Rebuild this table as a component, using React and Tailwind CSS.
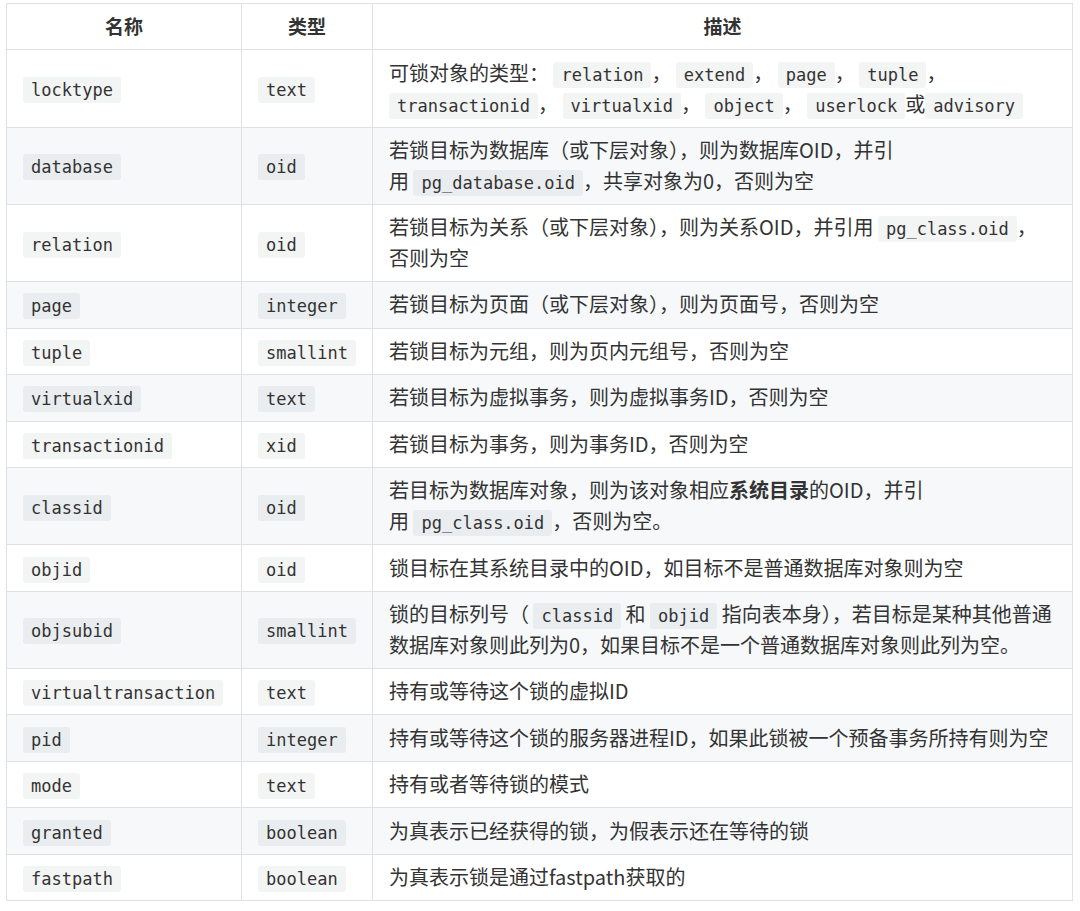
import React from "react";

const C = ({ children }) => (
  <code className="font-['DejaVu_Sans_Mono',monospace] text-[17px] leading-[20px] bg-[rgba(27,31,35,0.05)] rounded-[3px] px-2 py-[3px]">
    {children}
  </code>
);

const rows = [
  ["locktype", "text", (
    <>可锁对象的类型： <C>relation</C>， <C>extend</C>， <C>page</C>， <C>tuple</C>，<br /><C>transactionid</C>， <C>virtualxid</C>， <C>object</C>， <C>userlock</C>或<C>advisory</C></>
  )],
  ["database", "oid", (
    <>若锁目标为数据库（或下层对象），则为数据库OID，并引<br />用 <C>pg_database.oid</C>，共享对象为0，否则为空</>
  )],
  ["relation", "oid", (
    <>若锁目标为关系（或下层对象），则为关系OID，并引用 <C>pg_class.oid</C>，<br />否则为空</>
  )],
  ["page", "integer", <>若锁目标为页面（或下层对象），则为页面号，否则为空</>],
  ["tuple", "smallint", <>若锁目标为元组，则为页内元组号，否则为空</>],
  ["virtualxid", "text", <>若锁目标为虚拟事务，则为虚拟事务ID，否则为空</>],
  ["transactionid", "xid", <>若锁目标为事务，则为事务ID，否则为空</>],
  ["classid", "oid", (
    <>若目标为数据库对象，则为该对象相应<b className="font-bold">系统目录</b>的OID，并引<br />用 <C>pg_class.oid</C>，否则为空。</>
  )],
  ["objid", "oid", <>锁目标在其系统目录中的OID，如目标不是普通数据库对象则为空</>],
  ["objsubid", "smallint", (
    <>锁的目标列号（ <C>classid</C> 和 <C>objid</C> 指向表本身），若目标是某种其他普通<br />数据库对象则此列为0，如果目标不是一个普通数据库对象则此列为空。</>
  )],
  ["virtualtransaction", "text", <>持有或等待这个锁的虚拟ID</>],
  ["pid", "integer", <>持有或等待这个锁的服务器进程ID，如果此锁被一个预备事务所持有则为空</>],
  ["mode", "text", <>持有或者等待锁的模式</>],
  ["granted", "boolean", <>为真表示已经获得的锁，为假表示还在等待的锁</>],
  ["fastpath", "boolean", <>为真表示锁是通过fastpath获取的</>],
];

const cell = "border border-[#dfe2e5] px-4 py-[7.4px] align-middle whitespace-nowrap";

export default function App() {
  return (
    <div className="w-[1080px] h-[911px] bg-white pt-[3px] pl-[6px] font-['Noto_Sans_CJK_SC',sans-serif] text-[#333] text-[20px] leading-[30.7px]">
      <table className="border-collapse table-fixed w-[1067px]">
        <colgroup>
          <col className="w-[235px]" />
          <col className="w-[131px]" />
          <col />
        </colgroup>
        <thead>
          <tr className="bg-white">
            <th className={cell + " text-center font-bold text-[19px]"}>名称</th>
            <th className={cell + " text-center font-bold text-[19px]"}>类型</th>
            <th className={cell + " text-center font-bold text-[19px]"}>描述</th>
          </tr>
        </thead>
        <tbody>
          {rows.map(([n, t, d], i) => (
            <tr key={n} className={i % 2 === 1 ? "bg-[#f6f8fa]" : "bg-white"}>
              <td className={cell}><C>{n}</C></td>
              <td className={cell}><C>{t}</C></td>
              <td className={cell}>{d}</td>
            </tr>
          ))}
        </tbody>
      </table>
    </div>
  );
}
